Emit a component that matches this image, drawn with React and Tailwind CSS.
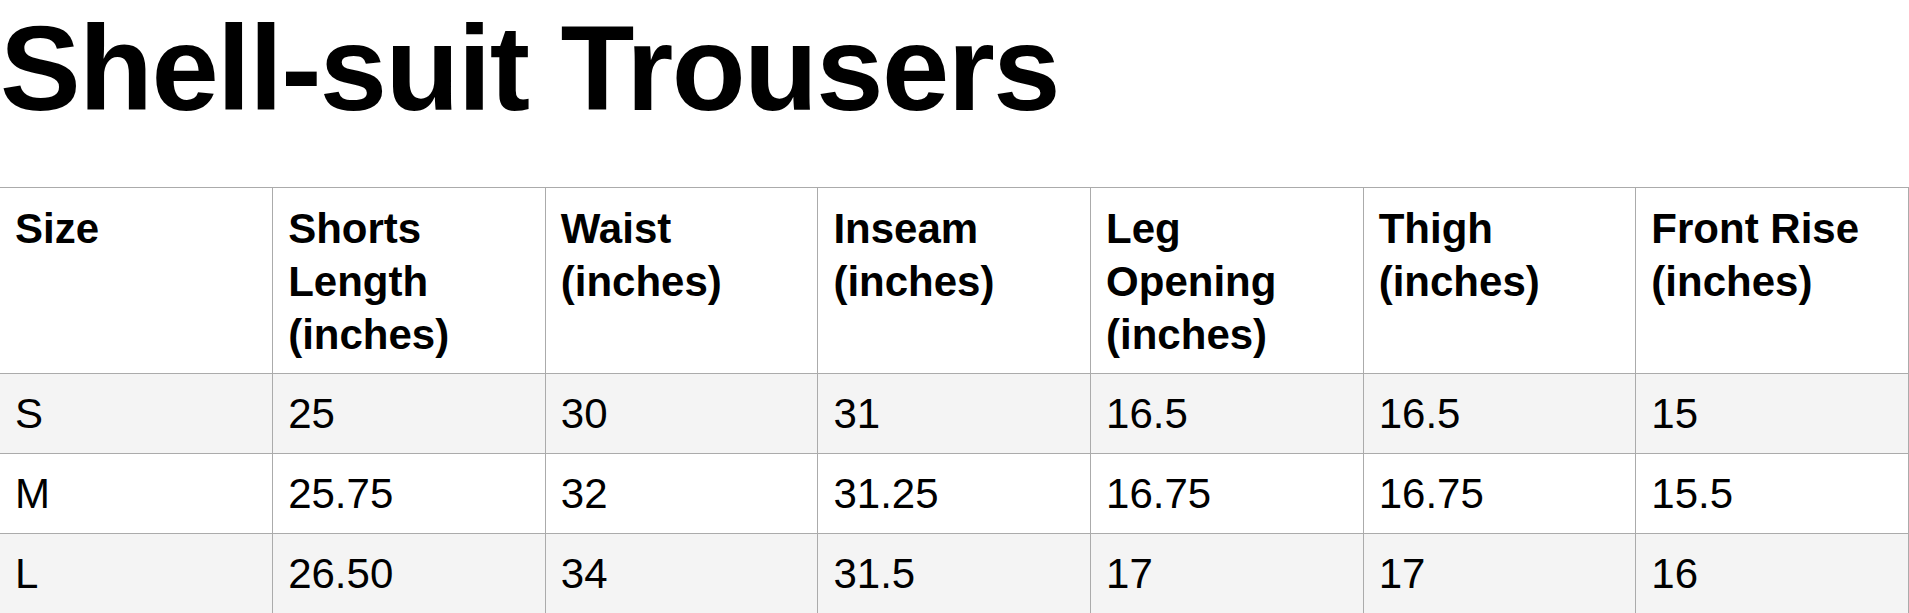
const columns = [
  "Size",
  "Shorts Length (inches)",
  "Waist (inches)",
  "Inseam (inches)",
  "Leg Opening (inches)",
  "Thigh (inches)",
  "Front Rise (inches)",
]

const rows = [
  ["S", "25", "30", "31", "16.5", "16.5", "15"],
  ["M", "25.75", "32", "31.25", "16.75", "16.75", "15.5"],
  ["L", "26.50", "34", "31.5", "17", "17", "16"],
]

export default function App() {
  return (
    <div className="w-[1909px] bg-white text-black font-['Liberation_Sans',Arial,sans-serif]">
      <h1 className="pt-[8px] pb-[58px] text-[121px] leading-[121px] font-bold tracking-[-1.6px]">
        Shell-suit Trousers
      </h1>
      <table className="w-full table-fixed border-collapse text-[42px] leading-[53px]">
        <thead>
          <tr>
            {columns.map((col, i) => (
              <th
                key={col}
                className={`border border-[#ababab] px-[15px] pt-[14px] pb-[12px] text-left align-top font-bold ${i === 0 ? "border-l-0" : ""}`}
              >
                {col}
              </th>
            ))}
          </tr>
        </thead>
        <tbody>
          {rows.map((row, r) => (
            <tr key={row[0]} className={r % 2 === 0 ? "bg-[#f4f4f4]" : "bg-white"}>
              {row.map((cell, i) => (
                <td
                  key={i}
                  className={`border border-[#ababab] px-[15px] py-[13px] align-top ${i === 0 ? "border-l-0" : ""}`}
                >
                  {cell}
                </td>
              ))}
            </tr>
          ))}
        </tbody>
      </table>
    </div>
  )
}
